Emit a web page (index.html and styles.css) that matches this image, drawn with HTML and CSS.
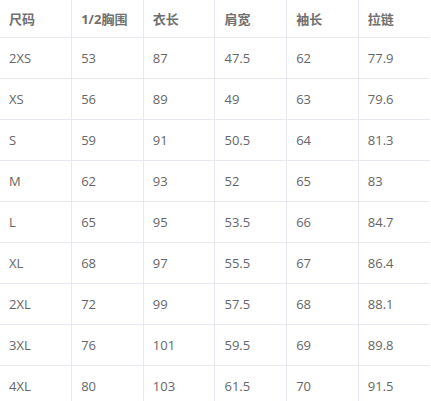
FILE: index.html
```html
<!DOCTYPE html>
<html lang="zh">
<head>
<meta charset="utf-8">
<title>尺码表</title>
<link rel="stylesheet" href="styles.css">
</head>
<body>
<table class="size-table">
  <thead>
    <tr><th>尺码</th><th>1/2胸围</th><th>衣长</th><th>肩宽</th><th>袖长</th><th>拉链</th></tr>
  </thead>
  <tbody>
    <tr><td>2XS</td><td>53</td><td>87</td><td>47.5</td><td>62</td><td>77.9</td></tr>
    <tr><td>XS</td><td>56</td><td>89</td><td>49</td><td>63</td><td>79.6</td></tr>
    <tr><td>S</td><td>59</td><td>91</td><td>50.5</td><td>64</td><td>81.3</td></tr>
    <tr><td>M</td><td>62</td><td>93</td><td>52</td><td>65</td><td>83</td></tr>
    <tr><td>L</td><td>65</td><td>95</td><td>53.5</td><td>66</td><td>84.7</td></tr>
    <tr><td>XL</td><td>68</td><td>97</td><td>55.5</td><td>67</td><td>86.4</td></tr>
    <tr><td>2XL</td><td>72</td><td>99</td><td>57.5</td><td>68</td><td>88.1</td></tr>
    <tr><td>3XL</td><td>76</td><td>101</td><td>59.5</td><td>69</td><td>89.8</td></tr>
    <tr><td>4XL</td><td>80</td><td>103</td><td>61.5</td><td>70</td><td>91.5</td></tr>
  </tbody>
</table>
</body>
</html>
```
FILE: styles.css
```css
html, body {
  margin: 0;
  padding: 0;
  background: #fff;
}
.size-table {
  width: 430px;
  table-layout: fixed;
  border-collapse: collapse;
  font-family: "Open Sans", "Noto Sans CJK SC", sans-serif;
  font-size: 13px;
  color: #666;
}
.size-table th,
.size-table td {
  padding: 0 0 0 9px;
  text-align: left;
  border-bottom: 1px solid #e8e9f0;
  border-left: 1px solid #e8e9f0;
  white-space: nowrap;
}
.size-table th:first-child,
.size-table td:first-child {
  border-left: none;
}
.size-table th {
  height: 37px;
  font-weight: bold;
  color: #707070;
}
.size-table td {
  height: 40px;
  font-weight: normal;
}
```
